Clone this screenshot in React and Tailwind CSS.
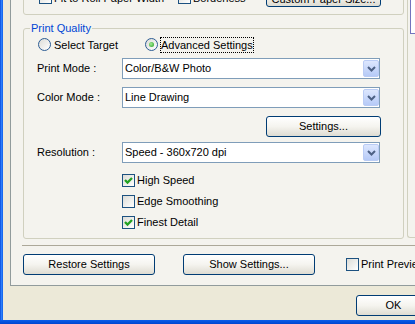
import React from 'react'

function CheckBox({ checked }) {
  return (
    <span className="flex h-[13px] w-[13px] shrink-0 items-center justify-center border border-[#1C5180] bg-linear-to-br from-[#DCDCD7] to-white">
      {checked && (
        <svg width="9" height="9" viewBox="0 0 9 9">
          <path d="M1 4 L3.5 6.6 L8 2" fill="none" stroke="#21A121" strokeWidth="2.3" />
        </svg>
      )}
    </span>
  )
}

function Radio({ on }) {
  return (
    <span className="mt-[1px] flex h-[13px] w-[13px] shrink-0 items-center justify-center rounded-full border border-[#2C5C94] bg-linear-to-br from-[#DCDCD7] to-white">
      {on && <span className="h-[5px] w-[5px] rounded-full bg-[radial-gradient(circle_at_40%_40%,#A6EE98,#1C9A18)]" />}
    </span>
  )
}

function Button({ children, className = '' }) {
  return (
    <div className={`flex h-[21px] shrink-0 justify-center rounded-[3px] border border-[#003C74] bg-linear-to-b from-white via-[#F5F4EF] to-[#DEDCD2] ${className}`}>
      {children}
    </div>
  )
}

function Combo({ value }) {
  return (
    <div className="flex h-[21px] w-[258px] shrink-0 items-center border border-[#7F9DB9] bg-white">
      <span className="flex-1 pl-[2px]">{value}</span>
      <span className="flex h-[17px] w-[16px] items-center justify-center rounded-[2px] border border-[#BACCF5] bg-linear-to-b from-[#DDE7FE] to-[#B6CAF7]">
        <svg width="9" height="6" viewBox="0 0 9 6">
          <path d="M1 1 L4.5 4.5 L8 1" fill="none" stroke="#4D6185" strokeWidth="2" />
        </svg>
      </span>
    </div>
  )
}

function ComboRow({ label, value, className = '' }) {
  return (
    <div className={`flex h-[21px] items-center pl-[13px] ${className}`}>
      <span className="w-[85px] shrink-0">{label}</span>
      <Combo value={value} />
    </div>
  )
}

export default function App() {
  return (
    <div className="flex h-[324px] w-[415px] flex-col overflow-hidden bg-[#ECE9D8] font-['Liberation_Sans',Arial,sans-serif] text-[11px] leading-[13px] text-black">
      <div className="flex min-h-0 flex-1">
        <div className="w-[3px] shrink-0 bg-linear-to-r from-[#0A48DA] via-[#2C7EFA] to-[#0A5EEA]" />
        <div className="flex min-w-0 flex-1 flex-col">
          {/* tab page */}
          <div className="-mt-[30px] ml-[7px] flex h-[316px] w-[500px] shrink-0 flex-col border border-r-0 border-[#919B9C] bg-[#F4F3EE]">
            <div className="flex items-start">
              <div className="ml-[12px] flex w-[381px] shrink-0 flex-col">
                {/* paper group (cut off) */}
                <div className="flex h-[44px] items-end rounded-[3px] border border-[#D0D0BF] pb-[7px] pl-[15px]">
                  <div className="mb-[2px] flex w-[139px] items-center gap-[2px]">
                    <CheckBox />
                    <span className="mt-[2px]">Fit to Roll Paper Width</span>
                  </div>
                  <div className="mb-[2px] flex w-[88px] items-center gap-[2px]">
                    <CheckBox />
                    <span className="mt-[2px]">Borderless</span>
                  </div>
                  <Button className="w-[115px] items-end">
                    <span className="mb-[0px]">Custom Paper Size...</span>
                  </Button>
                </div>

                <fieldset className="mt-[7px] rounded-[3px] border border-[#D0D0BF] p-0 pb-[5px]">
                  <legend className="ml-[6px] px-[1px] leading-[13px] text-[#0046D5]">Print Quality</legend>

                  <div className="mt-[2px] flex h-[16px] items-start pl-[14px]">
                    <label className="flex w-[107px] items-start gap-[3px]">
                      <Radio />
                      <span className="leading-[16px]">Select Target</span>
                    </label>
                    <label className="flex items-start gap-[2px]">
                      <Radio on />
                      <span className="border border-dotted border-black leading-[14px]">Advanced Settings</span>
                    </label>
                  </div>

                  <ComboRow className="mt-[5px]" label="Print Mode :" value="Color/B&W Photo" />
                  <ComboRow className="mt-[8px]" label="Color Mode :" value="Line Drawing" />

                  <div className="mt-[8px] flex pl-[242px]">
                    <Button className="w-[115px] items-center">Settings...</Button>
                  </div>

                  <ComboRow className="mt-[5px]" label="Resolution :" value="Speed - 360x720 dpi" />

                  <div className="mt-[7px] flex flex-col pl-[98px]">
                    {[
                      ['High Speed', true],
                      ['Edge Smoothing', false],
                      ['Finest Detail', true],
                    ].map(([t, c]) => (
                      <div key={t} className="flex h-[21px] items-center gap-[2px]">
                        <CheckBox checked={c} />
                        <span>{t}</span>
                      </div>
                    ))}
                  </div>
                </fieldset>
              </div>

              {/* right column (cut off) */}
              <div className="ml-[3px] h-[267px] w-[100px] shrink-0 rounded-bl-[3px] border-b border-l border-[#D0D0BF]">
                <div className="ml-[2px] h-[63px] w-[60px] border-b border-l border-[#7373BE] bg-white" />
              </div>
            </div>

            <div className="ml-[11px] mt-[6px] h-px w-[480px] bg-[#ACA899]" />

            <div className="mt-[8px] flex h-[21px] items-center pl-[12px]">
              <Button className="w-[132px] items-center">Restore Settings</Button>
              <Button className="ml-[28px] w-[132px] items-center">Show Settings...</Button>
              <div className="ml-[31px] flex shrink-0 items-center gap-[2px]">
                <CheckBox />
                <span className="whitespace-nowrap">Print Preview</span>
              </div>
            </div>
          </div>

          <Button className="ml-[353px] mt-[9px] h-[19px] w-[75px] items-center">OK</Button>
        </div>
      </div>
      <div className="h-[4px] shrink-0 bg-linear-to-b from-[#0A5EEA] to-[#0046D0]" />
    </div>
  )
}
